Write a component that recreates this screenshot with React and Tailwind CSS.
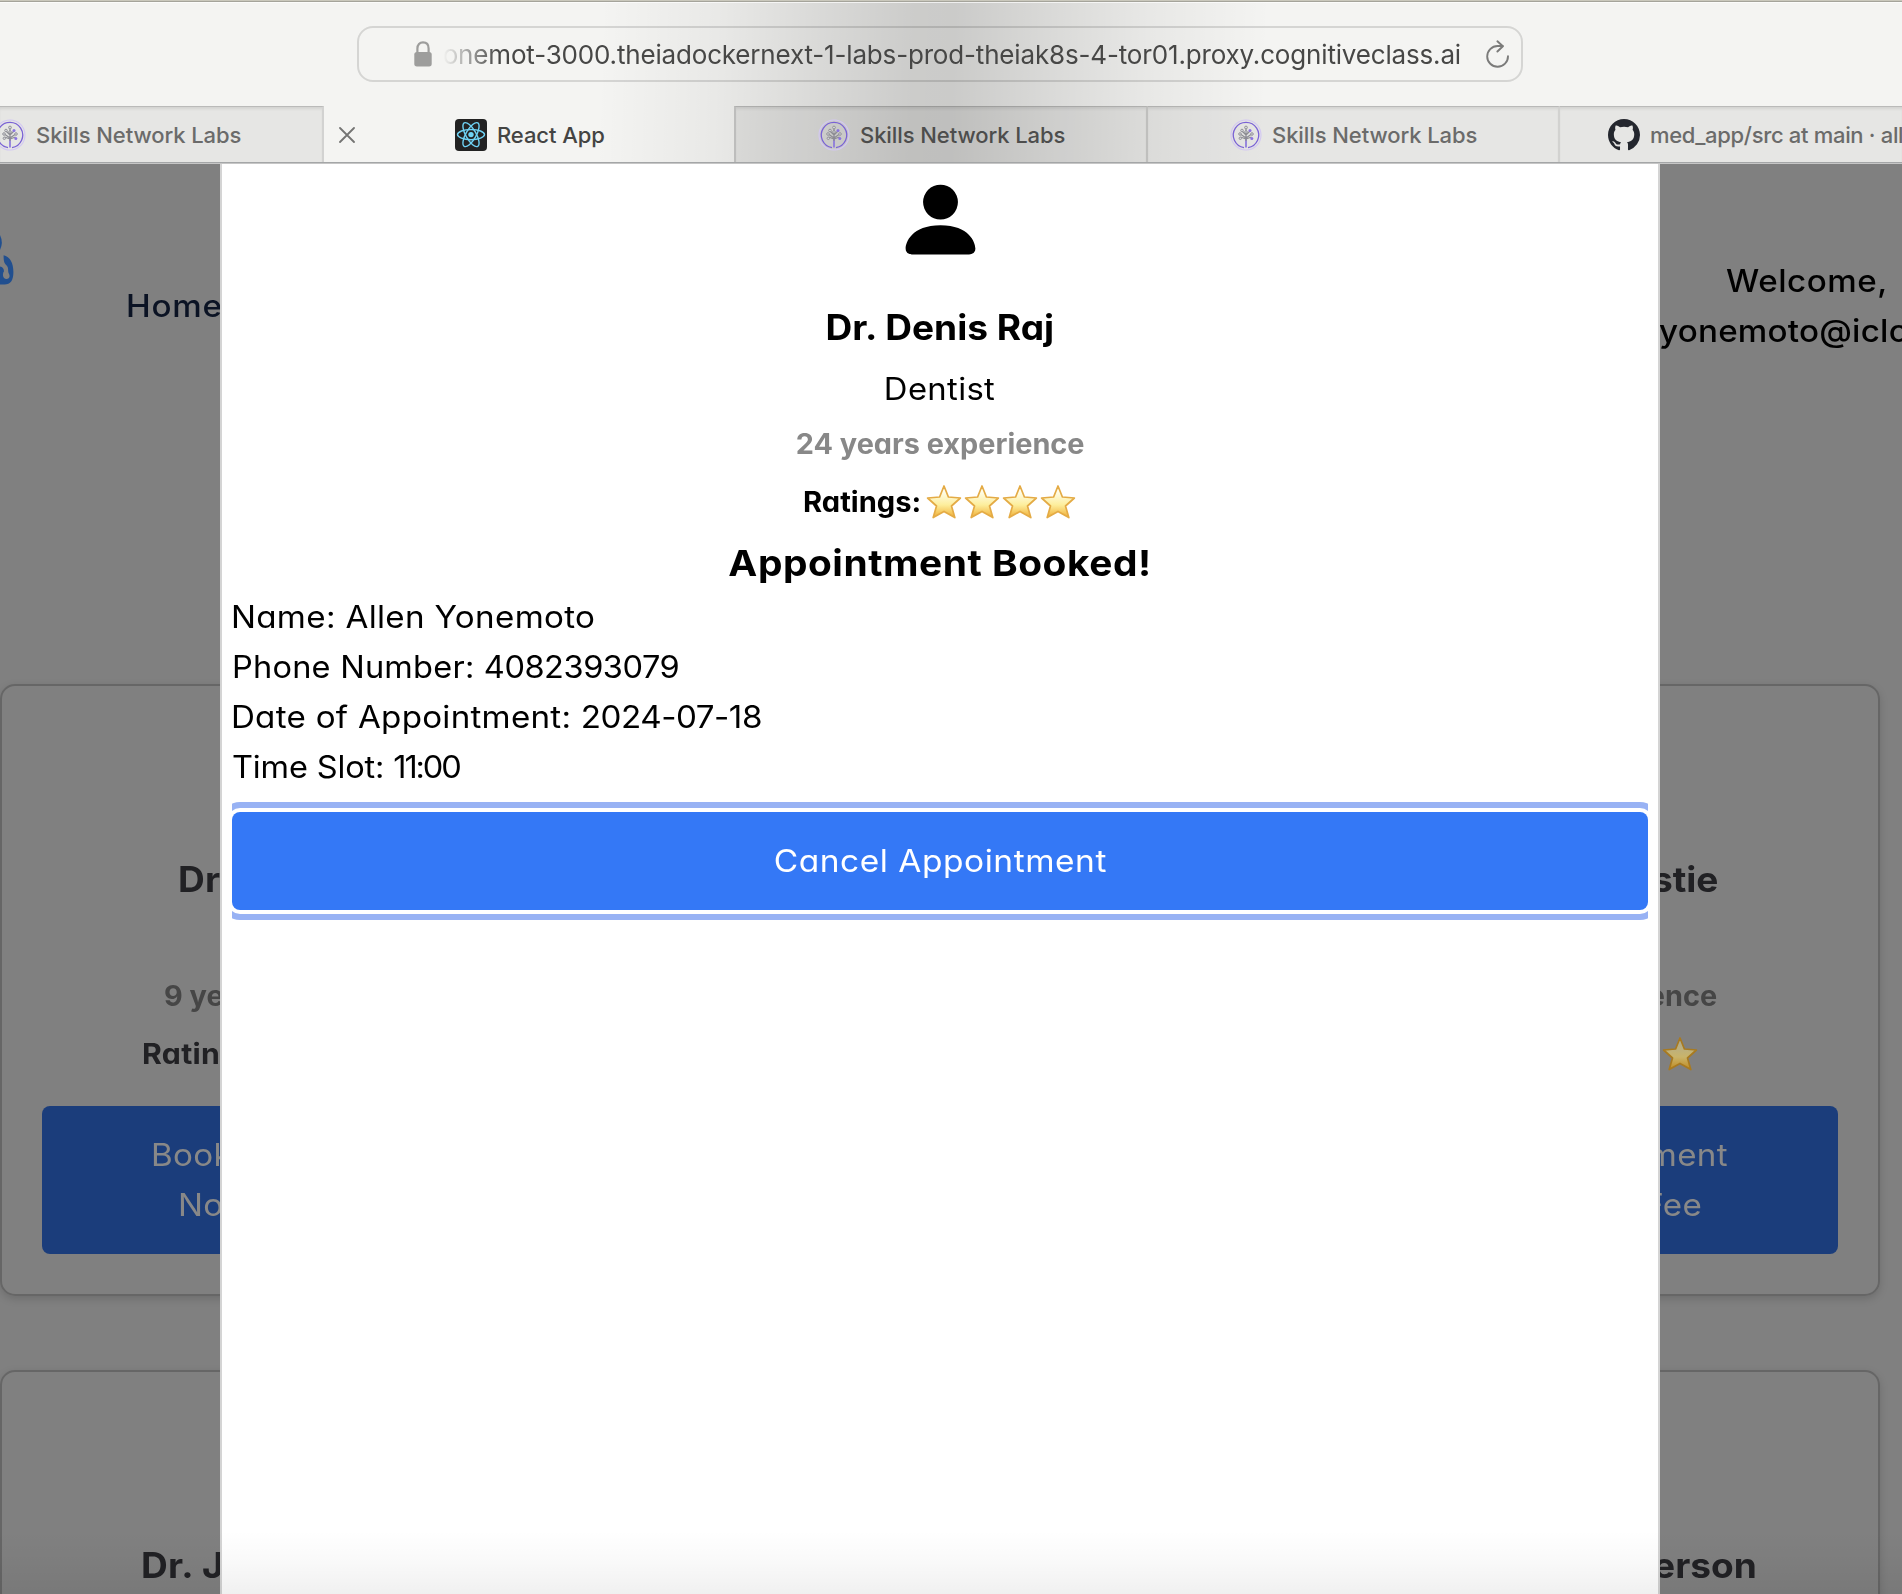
import React from "react";

function Lock() {
  return (
    <svg width="18" height="26" viewBox="0 0 18 26" fill="none" className="shrink-0">
      <path d="M3.4 12V7.5C3.4 3.6 5.7 1.3 9 1.3s5.6 2.3 5.6 6.2V12" stroke="#9d9d9c" strokeWidth="2.2" />
      <rect x="0.3" y="11" width="17.4" height="14.4" rx="2.6" fill="#9d9d9c" />
    </svg>
  );
}

function Reload() {
  return (
    <svg width="24" height="28" viewBox="0 0 24 28" fill="none" stroke="#7b7b7a" strokeWidth="1.9" strokeLinecap="round" strokeLinejoin="round" className="shrink-0">
      <path d="M22 16.3A10.4 10.4 0 1 1 11.6 6h5" />
      <path d="M11.4 1.3l5.5 4.9-5.5 5.3" />
    </svg>
  );
}

function SkillsIcon() {
  return (
    <svg width="32" height="32" viewBox="0 0 32 32" fill="none" className="shrink-0">
      <circle cx="16" cy="16" r="15" stroke="#d3c8f3" strokeWidth="1.1" />
      <path d="M18 28.6A12.7 12.7 0 1 0 14 28.6" stroke="#7a62d6" strokeWidth="1.3" />
      <path d="M16 17.5V28.5" stroke="#8b77dc" strokeWidth="1.7" />
      <g stroke="#8c8c92" strokeWidth="1.2">
        <path d="M16 9v13M16 16l-4-4M16 16l4-4M16 20l-5.5-2M16 20l5.5-2M11 15.5l5 3.5M21 15.5l-5 3.5" />
      </g>
      <g fill="#d9d9de" stroke="#8c8c92" strokeWidth="0.9">
        <circle cx="16" cy="8.5" r="1.4" />
        <circle cx="12" cy="11.5" r="1.3" />
        <circle cx="10" cy="15" r="1.3" />
        <circle cx="22" cy="15" r="1.3" />
        <circle cx="10.3" cy="19.3" r="1.2" />
        <circle cx="16" cy="13" r="1.3" />
      </g>
      <circle cx="20" cy="11.5" r="1.5" fill="#8a74e0" />
      <circle cx="21.8" cy="19.5" r="1.5" fill="#8a74e0" />
    </svg>
  );
}

function ReactIcon() {
  return (
    <svg width="32" height="32" viewBox="0 0 32 32" fill="none" className="shrink-0">
      <rect width="32" height="32" rx="4" fill="#222222" />
      <g stroke="#6fd3f5" strokeWidth="1.4">
        <ellipse cx="16" cy="15.6" rx="13.5" ry="5.1" />
        <ellipse cx="16" cy="15.6" rx="13.5" ry="5.1" transform="rotate(60 16 15.6)" />
        <ellipse cx="16" cy="15.6" rx="13.5" ry="5.1" transform="rotate(120 16 15.6)" />
      </g>
      <circle cx="16" cy="15.6" r="2.7" fill="#6fd3f5" />
    </svg>
  );
}

function GithubIcon() {
  return (
    <svg width="32" height="32" viewBox="0 0 16 16" fill="#24272e" className="shrink-0">
      <path d="M8 0C3.58 0 0 3.58 0 8c0 3.54 2.29 6.53 5.47 7.59.4.07.55-.17.55-.38 0-.19-.01-.82-.01-1.49-2.01.37-2.53-.49-2.69-.94-.09-.23-.48-.94-.82-1.13-.28-.15-.68-.52-.01-.53.63-.01 1.08.58 1.23.82.72 1.21 1.87.87 2.33.66.07-.52.28-.87.51-1.07-1.78-.2-3.64-.89-3.64-3.95 0-.87.31-1.59.82-2.15-.08-.2-.36-1.02.08-2.12 0 0 .67-.21 2.2.82.64-.18 1.32-.27 2-.27s1.36.09 2 .27c1.53-1.04 2.2-.82 2.2-.82.44 1.1.16 1.92.08 2.12.51.56.82 1.27.82 2.15 0 3.07-1.87 3.75-3.65 3.95.29.25.54.73.54 1.48 0 1.07-.01 1.93-.01 2.2 0 .21.15.46.55.38A8.01 8.01 0 0 0 16 8c0-4.42-3.58-8-8-8z" />
    </svg>
  );
}

function Person() {
  return (
    <svg width="93" height="93" viewBox="0 0 16 16" fill="#000" className="shrink-0">
      <path d="M3 14s-1 0-1-1 1-4 6-4 6 3 6 4-1 1-1 1H3zm5-6a3 3 0 1 0 0-6 3 3 0 0 0 0 6z" />
    </svg>
  );
}

function Star({ dim }) {
  const id = dim ? "starDim" : "starLit";
  const [top, mid, low, edge] = dim
    ? ["#b3ad8c", "#c9b46a", "#c08a20", "#a87a20"]
    : ["#fffef0", "#fdee9c", "#f0ae34", "#e4ab45"];
  return (
    <svg width="38" height="36" viewBox="0 0 38 36" className="shrink-0">
      <defs>
        <linearGradient id={id} x1="0" y1="0" x2="0" y2="1">
          <stop offset="0.15" stopColor={top} />
          <stop offset="0.6" stopColor={mid} />
          <stop offset="1" stopColor={low} />
        </linearGradient>
      </defs>
      <path
        d="M19 2L23.400 13L35.400 14L26.500 22L29.800 33.600L19 27.400L8.200 33.600L11.500 22L2.600 14L14.600 13Z"
        fill={`url(#${id})`}
        stroke={edge}
        strokeWidth="1.7"
        strokeLinejoin="round"
      />
    </svg>
  );
}

function Logo() {
  return (
    <svg width="16" height="56" viewBox="0 0 16 56" className="shrink-0">
      <path d="M0 5Q3.6 12.500 0 20Z" fill="#214f8f" />
      <path d="M3.600 25.200C10 26.500 13.400 33 13.400 42C13.400 50.500 10.500 54.500 4.500 54.500H0V36.500C2.500 37 4 38.600 4 41.200C2.600 43 2.600 46.500 4 48C6 50 9.600 49 9.600 46C9.600 44.200 8.300 43.600 8.200 41.500C8.200 38 8 36.500 5.600 34.500C3.600 32.500 3.600 29 3.600 25.200Z" fill="#214f8f" />
    </svg>
  );
}

function InactiveTab({ children, className }) {
  return (
    <div
      className={
        "flex items-center border-t border-t-[#00000030] bg-[#0000000e] shadow-[inset_0_3px_3px_-1px_#00000016] overflow-hidden " +
        className
      }
    >
      {children}
    </div>
  );
}

const tabText = "whitespace-nowrap text-[22px] leading-7 font-medium";

function Toolbar() {
  return (
    <header className="flex h-[164px] flex-col border-b border-b-[#c6c6c6] bg-[#f4f4f2] bg-[linear-gradient(92deg,transparent_600px,#0000000c_720px,#0000001c_820px,#0000002a_915px,#0000002b_955px,#0000001c_1050px,#0000000d_1147px,transparent_1270px)]">
      <div className="h-px bg-[#cac8bc]" />
      <div className="h-px bg-[#a5a49b]" />
      <div className="h-px bg-[#ffffffb0]" />
      <div className="flex h-[103px] pt-[23px]">
        <div className="ml-[357px] flex h-14 w-[1166px] items-center rounded-[16px] border-2 border-[#00000020] pl-[55px]">
          <Lock />
          <div className="ml-2 flex h-10 w-[1021px] items-center justify-end overflow-hidden pt-[2px] [mask-image:linear-gradient(90deg,transparent_3px,black_58px)]">
            <span className="whitespace-nowrap text-[26px] leading-10 tracking-[-0.170px] text-[#474746]">
              onemot-3000.theiadockernext-1-labs-prod-theiak8s-4-tor01.proxy.cognitiveclass.ai
            </span>
          </div>
          <div className="ml-[25px]">
            <Reload />
          </div>
        </div>
      </div>
      <nav className="flex h-14 w-full overflow-hidden">
        <InactiveTab className="w-[324px] shrink-0 border-r-2 border-r-[#d2d2d1] text-[#6b6b6a]">
          <div className="-ml-[6px] flex items-center gap-[10px] tracking-[-0.080px]">
            <SkillsIcon />
            <span className={tabText}>Skills Network Labs</span>
          </div>
        </InactiveTab>
        <div className="flex w-[410px] shrink-0 items-center pt-[2px] text-[#444443]">
          <svg width="16" height="16" viewBox="0 0 16 16" stroke="#747473" strokeWidth="1.8" strokeLinecap="round" className="ml-[15px]">
            <path d="M1 1l14 14M15 1L1 15" />
          </svg>
          <div className="ml-[100px] flex items-center gap-[10px] tracking-[-0.080px]">
            <ReactIcon />
            <span className={tabText}>React App</span>
          </div>
        </div>
        <InactiveTab className="w-[414px] shrink-0 border-x-2 border-x-[#00000020] text-[#4d4d4c]">
          <div className="ml-[82px] flex items-center gap-[10px] tracking-[-0.080px]">
            <SkillsIcon />
            <span className={tabText}>Skills Network Labs</span>
          </div>
        </InactiveTab>
        <InactiveTab className="w-[412px] shrink-0 border-r-2 border-r-[#00000016] text-[#6b6b6a]">
          <div className="ml-[82px] flex items-center gap-[10px] tracking-[-0.080px]">
            <SkillsIcon />
            <span className={tabText}>Skills Network Labs</span>
          </div>
        </InactiveTab>
        <InactiveTab className="min-w-0 flex-1 text-[#6b6b6a]">
          <div className="ml-12 flex items-center gap-[10px] tracking-[-0.320px]">
            <GithubIcon />
            <span className={tabText}>med_app/src at main · all</span>
          </div>
        </InactiveTab>
      </nav>
      <div className="h-px bg-[#a4a6a7]" />
    </header>
  );
}

function DoctorCard({ first, last }) {
  return (
    <article className="flex h-[612px] w-[1880px] shrink-0 flex-col rounded-[15px] border-2 border-[#666666] px-10 shadow-[0_3px_8px_#00000026]">
      <div className="mt-[165px] flex h-14 items-center justify-between pl-[136px] pr-[120px] text-[35px] font-bold text-[#212124]">
        <span className="origin-left scale-x-[1.06] tracking-[0.2px]">{first}</span>
        <span className="origin-right scale-x-[1.06]">{last}</span>
      </div>
      <div className="mt-[68px] flex h-[42px] items-center justify-between pl-[122px] pr-[121px] text-[28px] font-bold text-[#464646]">
        <span className="origin-left scale-x-[1.03]">9 years</span>
        <span className="origin-right scale-x-[1.03]">experience</span>
      </div>
      <div className="mt-4 flex h-[42px] items-center justify-between pl-[100px] pr-[139px] text-[28px] font-bold text-[#212124]">
        <span className="origin-left scale-x-[1.08] tracking-[0.3px]">Ratings:</span>
        <Star dim />
      </div>
      <div className="mt-[31px] flex h-[148px] flex-col rounded-lg bg-[#1b3d7b] pt-6 text-[31px] leading-[50px] tracking-[0.3px] text-[#888888]">
        <div className="flex justify-between pl-[109px] pr-[110px]">
          <span className="origin-left scale-x-[1.07]">Book</span>
          <span className="origin-right scale-x-[1.07]">Appointment</span>
        </div>
        <div className="flex justify-between px-[136px]">
          <span className="origin-left scale-x-[1.07]">No</span>
          <span className="origin-right scale-x-[1.07]">Fee</span>
        </div>
      </div>
    </article>
  );
}

function Page() {
  return (
    <div className="flex h-[1430px] w-full flex-col overflow-hidden bg-[#808080]">
      <div className="flex h-[520px] shrink-0 items-start justify-between text-[31px] font-medium leading-[50px]">
        <div className="flex">
          <div className="pt-[66px]">
            <Logo />
          </div>
          <span className="ml-[110px] mt-[117px] origin-left scale-x-[1.07] tracking-[0.7px] text-[#0b1324]">Home</span>
        </div>
        <div className="mt-[92px] flex w-[243px] flex-col items-start overflow-hidden whitespace-nowrap text-black">
          <span className="ml-[67px] origin-left scale-x-[1.07] tracking-[0.5px]">Welcome,</span>
          <span className="origin-left scale-x-[1.07] tracking-[0.220px]">yonemoto@iclo</span>
        </div>
      </div>
      <div className="flex flex-col gap-[74px]">
        <DoctorCard first="Dr." last="Christie" />
        <article className="flex h-[612px] w-[1880px] shrink-0 flex-col rounded-[15px] border-2 border-[#666666] px-10 shadow-[0_3px_8px_#00000026]">
          <div className="mt-[165px] flex h-14 items-center justify-between pl-[99px] pr-[81px] text-[35px] font-bold text-[#212124]">
            <span className="origin-left scale-x-[1.06] tracking-[0.3px]">Dr. J</span>
            <span className="origin-right scale-x-[1.06]">erson</span>
          </div>
        </article>
      </div>
    </div>
  );
}

function BookingModal() {
  return (
    <section className="absolute left-[220px] top-0 flex h-[1430px] w-[1440px] flex-col border-x-2 border-[#d4d4d4] bg-white px-[10px] pt-[9px] text-black">
      <div className="flex flex-col items-center">
        <Person />
        <h2 className="mt-[33px] h-14 scale-x-[1.06] text-[35px] font-bold leading-[56px]">Dr. Denis Raj</h2>
        <p className="mt-[9px] scale-x-[1.06] text-[31px] leading-[50px] tracking-[0.3px]">Dentist</p>
        <p className="mt-[9px] scale-x-[1.03] text-[28px] font-bold leading-[42px] text-[#888888]">24 years experience</p>
        <div className="mt-4 flex h-[42px] items-center text-[28px] font-bold leading-[42px]">
          <span className="origin-left scale-x-[1.04]">Ratings:</span>
          <div className="ml-[9px] flex">
            <Star />
            <Star />
            <Star />
            <Star />
          </div>
        </div>
        <h2 className="mt-3 scale-x-[1.08] text-[36px] font-bold leading-[56px] tracking-[0.5px]">Appointment Booked!</h2>
      </div>
      <div className="mt-px flex flex-col items-start text-[31px] leading-[50px]">
        <p className="origin-left scale-x-[1.07] -indent-[1px] tracking-[0.3px]">Name: Allen Yonemoto</p>
        <p className="origin-left scale-x-[1.05] tracking-[0.2px]">
          Phone Number: <span className="tracking-[-0.450px]">4082393079</span>
        </p>
        <p className="origin-left scale-x-[1.07] -indent-[1px] tracking-[0.240px]">
          Date of Appointment: <span className="tracking-[-0.450px]">2024-07-18</span>
        </p>
        <p className="origin-left scale-x-[1.05] tracking-[-0.150px]">
          Time Slot: <span className="tracking-[-2px]">11:00</span>
        </p>
      </div>
      <div className="mt-[6px] overflow-hidden py-[14px]">
        <button className="flex h-[98px] w-full items-center justify-center rounded-lg bg-[#3478f6] text-[31px] tracking-[0.5px] text-white shadow-[0_0_0_4px_#ffffff,0_0_0_10px_#98b2f4]">
          <span className="scale-x-[1.08]">Cancel Appointment</span>
        </button>
      </div>
    </section>
  );
}

export default function App() {
  return (
    <div className="h-[1594px] w-full overflow-hidden font-['Inter',sans-serif]">
      <Toolbar />
      <main className="relative h-[1430px] w-full overflow-hidden [font-feature-settings:'cv11']">
        <Page />
        <BookingModal />
        <div className="pointer-events-none absolute inset-x-0 bottom-0 h-16 bg-[linear-gradient(180deg,transparent,#00000006_50%,#0000000f)]" />
      </main>
    </div>
  );
}
